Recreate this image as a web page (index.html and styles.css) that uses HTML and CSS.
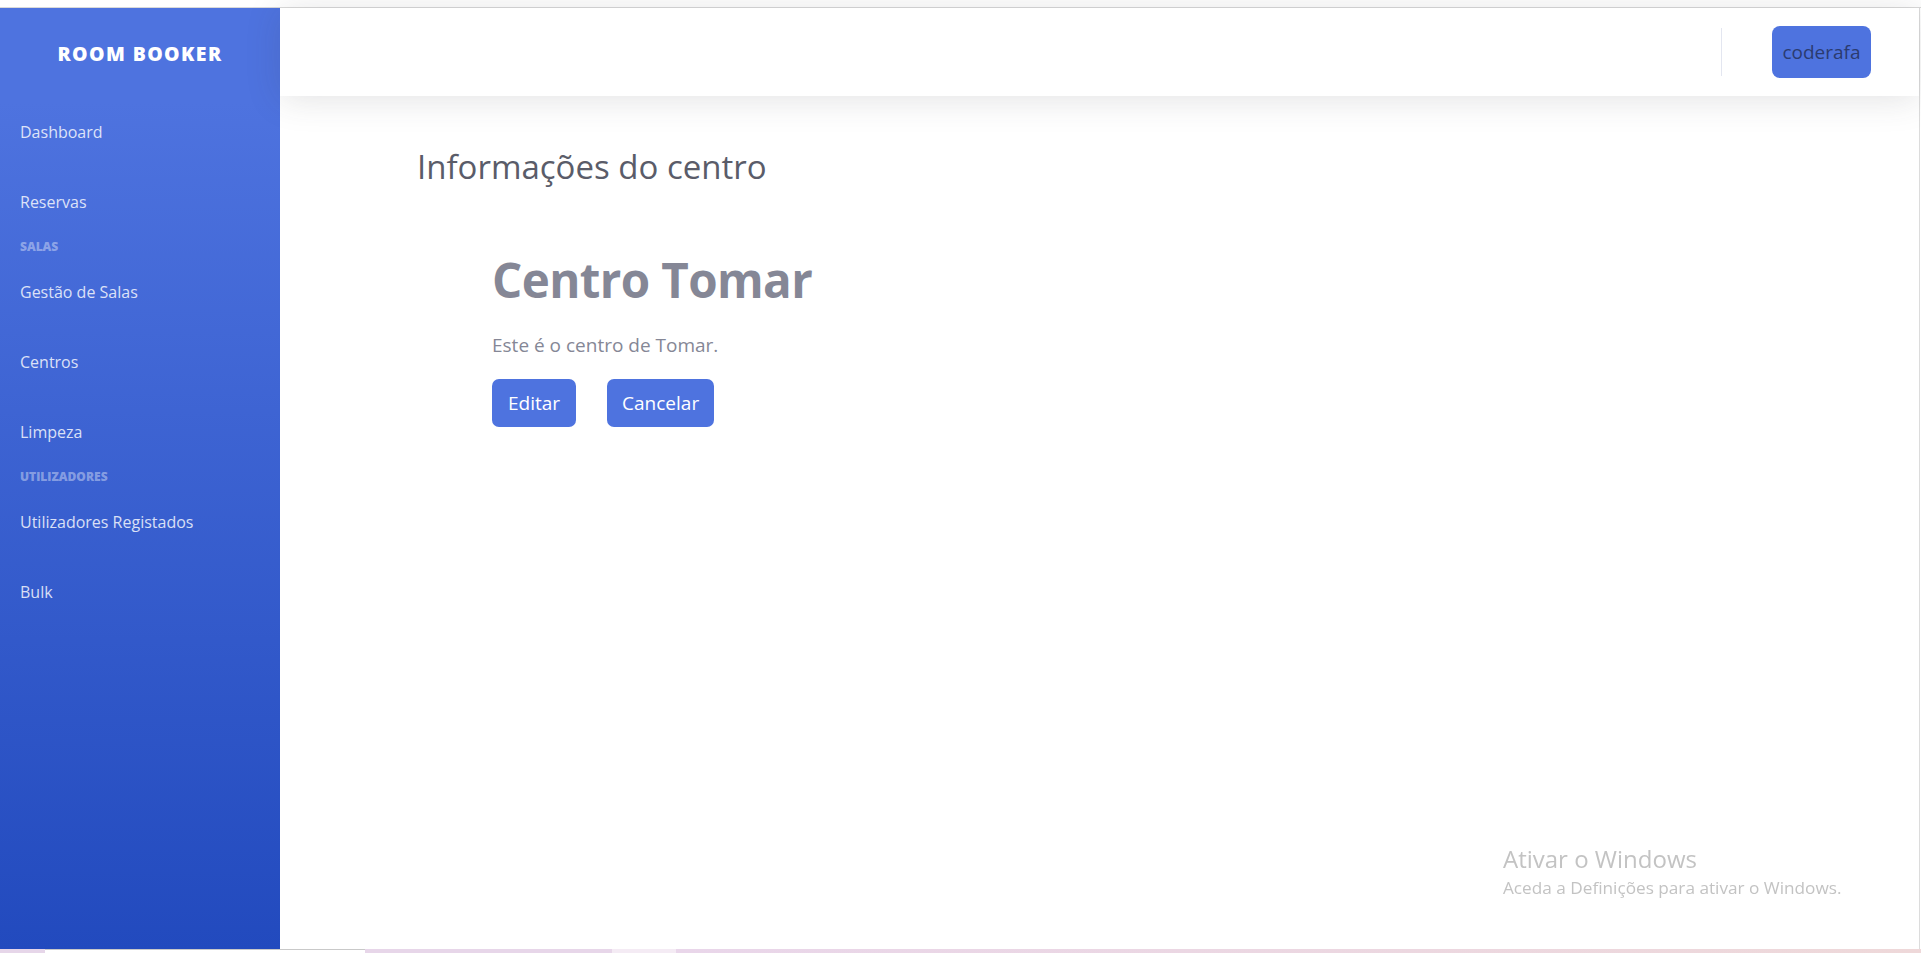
FILE: index.html
```html
<!DOCTYPE html>
<html lang="pt">
<head>
<meta charset="utf-8">
<title>Room Booker - Informações do centro</title>
<link rel="stylesheet" href="styles.css">
</head>
<body>
<div class="screen">
  <div class="top-strip"></div>
  <div class="app">
    <aside class="sidebar">
      <div class="brand">Room Booker</div>
      <nav class="nav">
        <a class="nav-link" href="#">Dashboard</a>
        <a class="nav-link" href="#">Reservas</a>
        <div class="nav-heading">Salas</div>
        <a class="nav-link" href="#">Gestão de Salas</a>
        <a class="nav-link" href="#">Centros</a>
        <a class="nav-link" href="#">Limpeza</a>
        <div class="nav-heading">Utilizadores</div>
        <a class="nav-link" href="#">Utilizadores Registados</a>
        <a class="nav-link" href="#">Bulk</a>
      </nav>
    </aside>
    <div class="main">
      <header class="topbar">
        <div class="topbar-divider"></div>
        <button class="user-btn">coderafa</button>
      </header>
      <section class="content">
        <h3 class="page-title">Informações do centro</h3>
        <div class="center-info">
          <h1 class="center-name">Centro Tomar</h1>
          <p class="center-desc">Este é o centro de Tomar.</p>
          <div class="actions">
            <button class="btn btn-edit">Editar</button>
            <button class="btn btn-cancel">Cancelar</button>
          </div>
        </div>
      </section>
    </div>
    <div class="right-edge"></div>
  </div>
  <div class="taskbar">
    <div class="tb-a"></div>
    <div class="tb-b"></div>
    <div class="tb-c"></div>
    <div class="tb-d"></div>
    <div class="tb-e"></div>
  </div>
</div>
<div class="watermark">
  <div class="wm-title">Ativar o Windows</div>
  <div class="wm-sub">Aceda a Definições para ativar o Windows.</div>
</div>
</body>
</html>
```
FILE: styles.css
```css
* { box-sizing: border-box; }
html, body {
  margin: 0;
  padding: 0;
  width: 1921px;
  height: 953px;
  overflow: hidden;
  background: #ffffff;
  font-family: "Open Sans", "Noto Sans", Arial, sans-serif;
}
.screen {
  display: flex;
  flex-direction: column;
  width: 1921px;
  height: 953px;
}
.top-strip {
  height: 8px;
  flex: none;
  background: #ffffff;
  border-bottom: 1px solid #d9d9d9;
}
.app {
  flex: 1;
  display: flex;
  min-height: 0;
}
.sidebar {
  width: 280px;
  flex: none;
  background: linear-gradient(180deg, #4e73df 10%, #224abe 100%);
  display: flex;
  flex-direction: column;
}
.brand {
  height: 88px;
  display: flex;
  align-items: center;
  justify-content: center;
  color: #ffffff;
  font-weight: 800;
  font-size: 19.5px;
  text-transform: uppercase;
  letter-spacing: 1.4px;
  padding-top: 2px;
}
.nav {
  display: flex;
  flex-direction: column;
}
.nav-link {
  height: 70px;
  display: flex;
  align-items: center;
  padding-left: 20px;
  padding-top: 2px;
  color: rgba(255, 255, 255, 0.82);
  text-decoration: none;
  font-size: 16px;
}
.nav-heading {
  height: 20px;
  display: flex;
  align-items: center;
  padding-left: 20px;
  color: rgba(255, 255, 255, 0.4);
  font-weight: 800;
  font-size: 12px;
  text-transform: uppercase;
}
.main {
  flex: 1;
  display: flex;
  flex-direction: column;
  min-width: 0;
}
.topbar {
  height: 88px;
  flex: none;
  background: #ffffff;
  display: flex;
  align-items: center;
  justify-content: flex-end;
  padding-right: 48px;
  box-shadow: 0 3px 35px 0 rgba(58, 59, 69, 0.15);
  position: relative;
  z-index: 1;
}
.topbar-divider {
  width: 1px;
  height: 48px;
  background: #e3e6f0;
  margin-right: 50px;
}
.user-btn {
  width: 99px;
  height: 52px;
  border: none;
  border-radius: 8px;
  background: #4e73df;
  color: #2b3b70;
  font-family: inherit;
  font-size: 19px;
  padding: 0;
}
.content {
  padding: 50px 0 0 137px;
}
.page-title {
  margin: 0;
  font-size: 33px;
  line-height: 42px;
  font-weight: 400;
  color: #5a5c69;
}
.center-info {
  padding: 62px 0 0 75px;
}
.center-name {
  margin: 0;
  font-size: 47.5px;
  line-height: 60px;
  font-weight: 700;
  letter-spacing: -0.6px;
  color: #858796;
}
.center-desc {
  margin: 20px 0 0 0;
  font-size: 19px;
  line-height: 30px;
  color: #858796;
}
.actions {
  display: flex;
  gap: 31px;
  margin-top: 19px;
}
.btn {
  height: 48px;
  border: none;
  border-radius: 7px;
  background: #4e73df;
  color: #ffffff;
  font-family: inherit;
  font-size: 19px;
  padding: 0 16px;
}
.btn-cancel {
  padding: 0 15px;
}
.right-edge {
  width: 2px;
  flex: none;
  border-left: 1px solid #dcdcdc;
  background: #ffffff;
}
.taskbar {
  height: 4px;
  flex: none;
  display: flex;
}
.tb-a { width: 45px; background: #e6d6e9; }
.tb-b { width: 320px; background: #ffffff; border-top: 1px solid #c9c9c9; }
.tb-c { width: 247px; background: #e7d6e9; }
.tb-d { width: 64px; background: #f4ebf4; }
.tb-e { flex: 1; background: linear-gradient(90deg, #e9d6ea, #eed8d9); }
.watermark {
  position: fixed;
  left: 1503px;
  top: 843px;
  color: #c3c3c3;
  font-family: "Open Sans", "Noto Sans", sans-serif;
}
.wm-title {
  font-size: 24px;
  line-height: 32px;
}
.wm-sub {
  font-size: 17.2px;
  line-height: 26px;
}
```
